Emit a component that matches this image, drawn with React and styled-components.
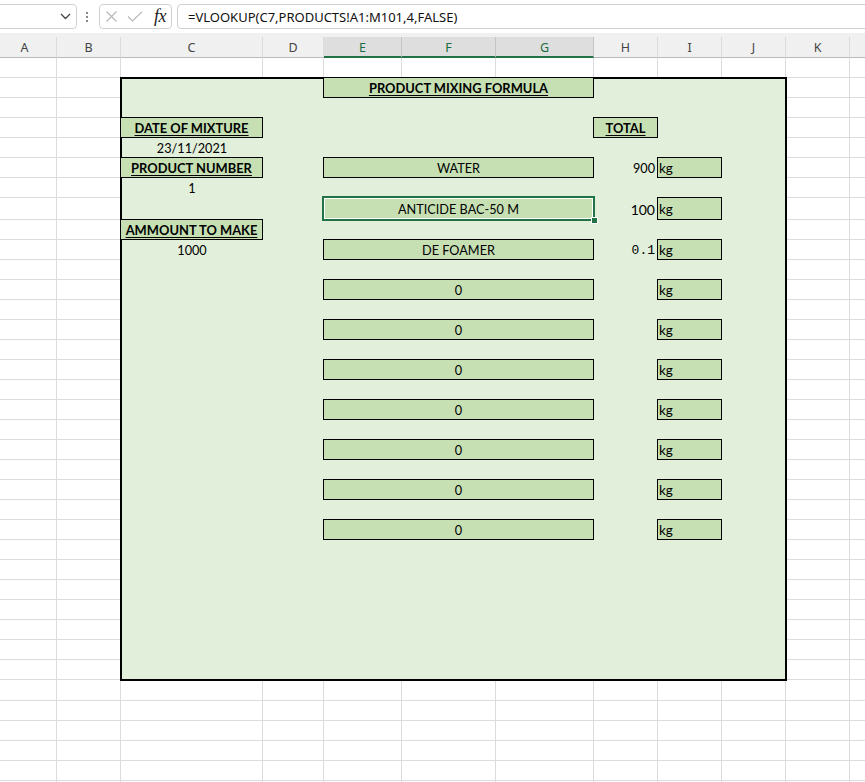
import React from 'react';
import styled, { createGlobalStyle } from 'styled-components';

const COLS = [64, 64, 142, 61, 78, 94, 98, 64, 64, 64, 64, 64];
const LETTERS = 'ABCDEFGHIJK'.split('').concat(['']);
const ROWS = Array.from({ length: 37 }, (_, i) => (i === 7 ? 22 : i === 31 ? 21 : 20));
const colTpl = COLS.map((w) => w + 'px').join(' ');
const rowTpl = ROWS.map((h) => h + 'px').join(' ');
const SELECTED = ['E', 'F', 'G'];

const CELL_FONT = "Lato, 'Liberation Sans', Arial, sans-serif";

const Global = createGlobalStyle`
  html, body { margin: 0; padding: 0; background: #fff; overflow: hidden; }
  body { width: 865px; height: 782px; font-family: ${CELL_FONT}; }
  * { box-sizing: border-box; }
`;

const Page = styled.div`
  width: 865px;
  height: 782px;
  overflow: hidden;
  background: #fff;
  display: flex;
  flex-direction: column;
`;

/* ---------- formula bar ---------- */
const Toolbar = styled.div`
  flex: none;
  height: 33px;
  padding-top: 4px;
  display: flex;
  align-items: flex-start;
  background: #fff;
`;

const NameBox = styled.div`
  margin-left: -6px;
  width: 83px;
  height: 25px;
  border: 1px solid #d1d1d1;
  border-radius: 4px;
  background: #fff;
  display: flex;
  align-items: center;
  justify-content: flex-end;
  padding-right: 5px;
`;

const Dots = styled.div`
  margin: 8px 0 0 9px;
  width: 3px;
  display: flex;
  flex-direction: column;
  gap: 2px;
  & > span {
    width: 2px;
    height: 2px;
    background: #8a8a8a;
  }
`;

const FxBox = styled.div`
  margin-left: 10px;
  width: 73px;
  height: 25px;
  border: 1px solid #d1d1d1;
  border-radius: 4px;
  background: #fff;
  display: flex;
  align-items: center;
  padding-left: 5px;
`;

const Fx = styled.span`
  margin-left: 11px;
  font-family: 'Liberation Serif', 'DejaVu Serif', serif;
  font-style: italic;
  font-size: 18px;
  color: #222;
  letter-spacing: -0.5px;
  line-height: 1;
  margin-top: -1px;
`;

const FormulaBox = styled.div`
  margin-left: 5px;
  margin-right: -10px;
  flex: 1;
  height: 25px;
  border: 1px solid #d1d1d1;
  border-radius: 4px;
  background: #fff;
  display: flex;
  align-items: center;
  padding-left: 10px;
  font-family: 'Noto Sans', 'Open Sans', sans-serif;
  font-size: 13px;
  color: #111;
  white-space: nowrap;
`;

/* ---------- column headers ---------- */
const HeaderRow = styled.div`
  flex: none;
  height: 25px;
  margin-left: -7px;
  display: grid;
  grid-template-columns: ${colTpl};
  align-items: end;
  background: #f0f0f0;
`;

const ColLetter = styled.div`
  height: 21px;
  display: flex;
  align-items: center;
  justify-content: center;
  padding-top: 1px;
  font-family: 'Noto Sans', 'Open Sans', sans-serif;
  font-size: 12.5px;
  color: ${(p) => (p.$selected ? '#1d6b40' : '#444')};
  background: ${(p) => (p.$selected ? '#dedede' : '#f0f0f0')};
  border-right: 1px solid ${(p) => (p.$selected ? '#c4c4c4' : '#dcdcdc')};
  border-bottom: ${(p) => (p.$selected ? '2px solid #217346' : '1px solid #b9b9b9')};
`;

/* ---------- sheet ---------- */
const SheetBody = styled.div`
  flex: none;
  margin-left: -7px;
  display: grid;
  grid-template-areas: 'stack';
  & > * {
    grid-area: stack;
  }
`;

const GridLines = styled.div`
  display: grid;
  grid-template-columns: ${colTpl};
  grid-template-rows: ${rowTpl};
`;

const GridCell = styled.div`
  border-right: 1px solid #dcdcdc;
  border-bottom: 1px solid #dcdcdc;
`;

const Content = styled.div`
  display: grid;
  grid-template-columns: ${colTpl};
  grid-template-rows: ${rowTpl};
`;

const FormBox = styled.div`
  grid-column: 3 / 11;
  grid-row: 2 / 32;
  margin: -1px;
  border: 2px solid #000;
  background: #e2efda;
`;

const Cell = styled.div`
  grid-column: ${(p) => p.$col};
  grid-row: ${(p) => p.$row};
  display: flex;
  align-items: center;
  min-width: 0;
  white-space: nowrap;
  font-family: ${CELL_FONT};
  font-size: 12.7px;
  color: #000;
`;

const Framed = styled(Cell)`
  margin: -1px 0 0 -1px;
  border: 1px solid #000;
  background: #c6e0b4;
  justify-content: ${(p) => (p.$left ? 'flex-start' : 'center')};
  padding-left: ${(p) => (p.$left ? '1px' : '0')};
  font-size: ${(p) => (p.$left ? '13.5px' : '12.7px')};
`;

const Heading = styled(Framed)`
  font-weight: 700;
  font-size: 12.9px;
  text-decoration: underline;
  text-underline-offset: 2px;
  text-decoration-thickness: 1px;
`;

const Centered = styled(Cell)`
  justify-content: center;
`;

const Amount = styled(Cell)`
  justify-content: flex-end;
  padding-right: 3px;
  font-size: ${(p) => p.$size || 12.7}px;
  font-family: ${(p) => (p.$mono ? "'Liberation Mono', 'DejaVu Sans Mono', monospace" : CELL_FONT)};
`;

const Selection = styled.div`
  grid-column: 5 / 8;
  grid-row: 8;
  margin: -2px -1px -1px -2px;
  border: 2px solid #217346;
  box-shadow: inset 0 0 0 1px #fff;
  position: relative;
  z-index: 2;
  pointer-events: none;
  &::after {
    content: '';
    position: absolute;
    right: -5px;
    bottom: -5px;
    width: 7px;
    height: 7px;
    background: #217346;
    border: 1px solid #fff;
    box-sizing: border-box;
  }
`;

const Chevron = () => (
  <svg width="11" height="7" viewBox="0 0 11 7">
    <path d="M1 1 L5.5 5.5 L10 1" fill="none" stroke="#444" strokeWidth="1.3" />
  </svg>
);

const Cross = () => (
  <svg width="13" height="13" viewBox="0 0 13 13">
    <path d="M1.5 1.5 L11.5 11.5 M11.5 1.5 L1.5 11.5" fill="none" stroke="#b9b9b9" strokeWidth="1.2" />
  </svg>
);

const Check = () => (
  <svg width="16" height="11" viewBox="0 0 16 11" style={{ marginLeft: 9 }}>
    <path d="M1 5.5 L5.5 10 L15 0.8" fill="none" stroke="#b9b9b9" strokeWidth="1.2" />
  </svg>
);

const ITEMS = [
  { name: 'WATER', amount: '900', row: 6 },
  { name: 'ANTICIDE BAC-50 M', amount: '100', row: 8, size: 14 },
  { name: 'DE FOAMER', amount: '0.1', row: 10, mono: true, size: 13 },
  { name: '0', row: 12 },
  { name: '0', row: 14 },
  { name: '0', row: 16 },
  { name: '0', row: 18 },
  { name: '0', row: 20 },
  { name: '0', row: 22 },
  { name: '0', row: 24 },
];

export default function App() {
  const gridCells = [];
  ROWS.forEach((_, r) => COLS.forEach((__, c) => gridCells.push(<GridCell key={r + '-' + c} />)));

  return (
    <Page>
      <Global />
      <Toolbar>
        <NameBox>
          <Chevron />
        </NameBox>
        <Dots>
          <span />
          <span />
          <span />
        </Dots>
        <FxBox>
          <Cross />
          <Check />
          <Fx>fx</Fx>
        </FxBox>
        <FormulaBox>=VLOOKUP(C7,PRODUCTS!A1:M101,4,FALSE)</FormulaBox>
      </Toolbar>

      <HeaderRow>
        {LETTERS.map((l, i) => (
          <ColLetter key={i} $selected={SELECTED.includes(l)}>
            {l}
          </ColLetter>
        ))}
      </HeaderRow>

      <SheetBody>
        <GridLines>{gridCells}</GridLines>
        <Content>
          <FormBox />
          <Heading $col="5 / 8" $row={2}>PRODUCT MIXING FORMULA</Heading>
          <Heading $col="3" $row={4}>DATE OF MIXTURE</Heading>
          <Heading $col="8" $row={4}>TOTAL</Heading>
          <Centered $col="3" $row={5}>23/11/2021</Centered>
          <Heading $col="3" $row={6}>PRODUCT NUMBER</Heading>
          <Centered $col="3" $row={7}>1</Centered>
          <Heading $col="3" $row={9}>AMMOUNT TO MAKE</Heading>
          <Centered $col="3" $row={10}>1000</Centered>
          {ITEMS.map((it) => (
            <React.Fragment key={it.row}>
              <Framed $col="5 / 8" $row={it.row}>{it.name}</Framed>
              {it.amount && (
                <Amount $col="8" $row={it.row} $size={it.size} $mono={it.mono}>
                  {it.amount}
                </Amount>
              )}
              <Framed $col="9" $row={it.row} $left>kg</Framed>
            </React.Fragment>
          ))}
          <Selection />
        </Content>
      </SheetBody>
    </Page>
  );
}
